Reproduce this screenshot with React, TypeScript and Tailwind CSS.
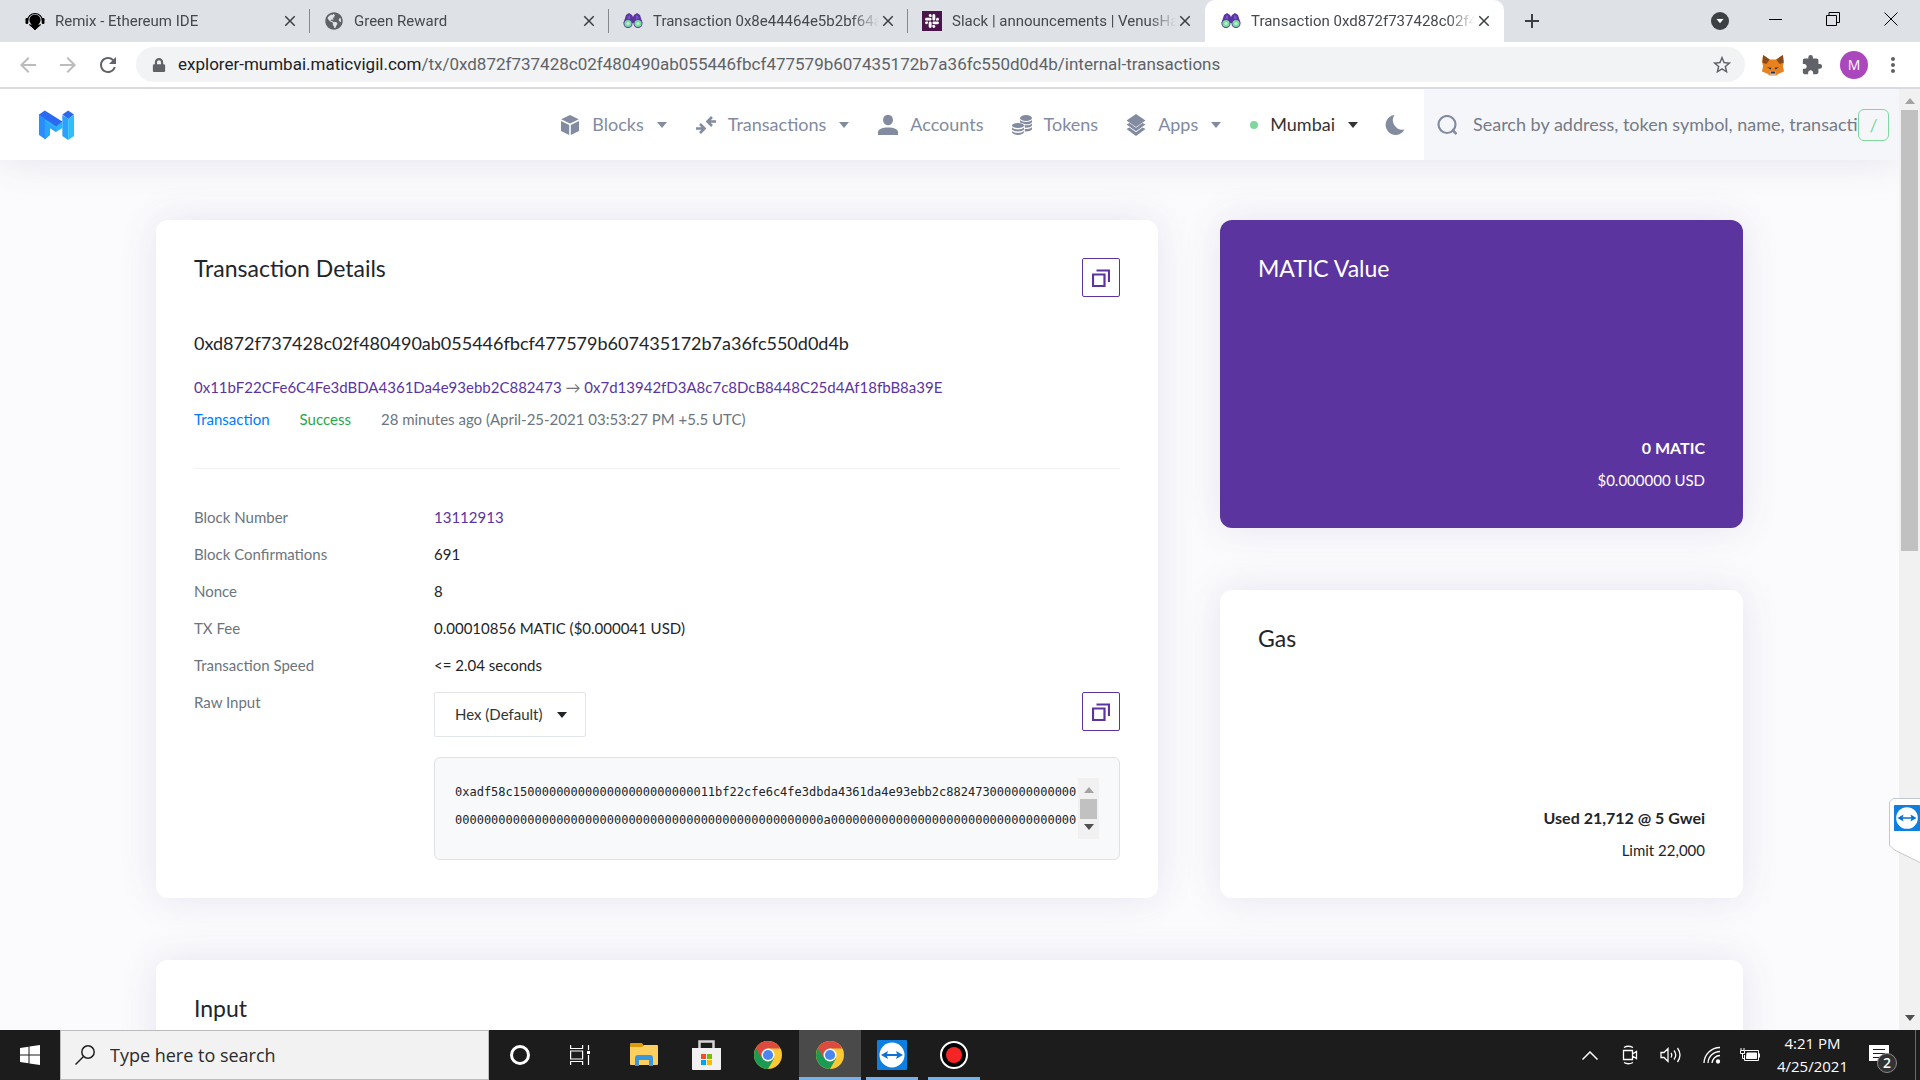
import type { ReactNode } from "react";
import { FaGlobeAmericas, FaSlack, FaLock } from "react-icons/fa";
import {
  MdArrowBack,
  MdArrowForward,
  MdRefresh,
  MdStarBorder,
  MdMoreVert,
  MdClose,
  MdAdd,
  MdExtension,
} from "react-icons/md";

const ADDRESS_FROM = "0x11bF22CFe6C4Fe3dBDA4361Da4e93ebb2C882473";
const ADDRESS_TO = "0x7d13942fD3A8c7c8DcB8448C25d4Af18fbB8a39E";
const TX_HASH = "0xd872f737428c02f480490ab055446fbcf477579b607435172b7a36fc550d0d4b";

const RAW_INPUT =
  "0xadf58c15" +
  "0".repeat(24) +
  "11bf22cfe6c4fe3dbda4361da4e93ebb2c882473" +
  "0".repeat(63) +
  "a" +
  "0".repeat(34);

/* ---------- icons ---------- */

function Binoculars() {
  return (
    <svg viewBox="0 0 20 20" className="size-5">
      <path d="M3 4l3-2 3 2 1 2 1-2 3-2 3 2 2.500 8H.5z" fill="#5b34a0" />
      <path d="M5 5l2-1v5H4zM13 4l2 1 1 4h-3z" fill="#7b50cf" />
      <circle cx="5" cy="12.500" r="4.500" fill="#5b34a0" />
      <circle cx="15" cy="12.500" r="4.500" fill="#5b34a0" />
      <circle cx="5" cy="12.500" r="3.600" fill="#7bdc9f" />
      <circle cx="15" cy="12.500" r="3.600" fill="#7bdc9f" />
      <circle cx="5" cy="12.500" r="1.500" fill="#b8f2cd" />
      <circle cx="15" cy="12.500" r="1.500" fill="#b8f2cd" />
    </svg>
  );
}

function RemixIcon() {
  return (
    <svg viewBox="0 0 20 20" className="size-5">
      <path d="M2.500 10a7.500 7.500 0 0 1 15 0" fill="none" stroke="#000" strokeWidth="1.200" />
      <circle cx="10" cy="9" r="5.600" fill="#000" />
      <rect x="0.500" y="7" width="2.800" height="6" rx="1.200" fill="#000" />
      <rect x="16.700" y="7" width="2.800" height="6" rx="1.200" fill="#000" />
      <path d="M4 13.500l3 2.500h6l3-2.500M7 16l3 3 3-3z" fill="#000" stroke="#000" strokeWidth="0.800" />
    </svg>
  );
}

function MaticLogo() {
  return (
    <svg viewBox="0 0 36 30" className="h-[30px] w-[35px]" preserveAspectRatio="none">
      <path d="M0 4l11 7v14l-5 4-6-4z" fill="#2b8cff" />
      <path d="M11 13v12l-5 4.500-0-14z" fill="#2b9cfd" />
      <path d="M11.500 18l6 4 6.500-4v-7l-8 1-10-2v5z" fill="#2bb4fb" />
      <path d="M6 11l11.500 7v4L11 18v7l-5 4.500z" fill="#2ba4fc" />
      <path d="M0 4.500L6 .5l18 11-6.500 5z" fill="#2b6af0" />
      <path d="M24 5l6 4v21l-6-4z" fill="#2ba0fd" />
      <path d="M36 5l-6 4v21l6-4z" fill="#2cc0fa" />
      <path d="M24 4.500l6-4 6 4-6 4.500z" fill="#2b6af0" />
    </svg>
  );
}

function CubeIcon() {
  return (
    <svg viewBox="0 0 20 20" className="size-5" fill="currentColor">
      <path d="M10 0l8.800 4.300L10 8.600 1.200 4.300z" />
      <path d="M1 6l8.200 4v10L1 16z" />
      <path d="M19 6l-8.200 4v10L19 16z" />
    </svg>
  );
}

function SwapIcon() {
  return (
    <svg viewBox="0 0 20 20" className="size-5" fill="none" stroke="currentColor" strokeWidth="2.600">
      <path d="M20 6.500h-7.500M16 2l-4.500 4.500L16 11" />
      <path d="M0 13.500h7.500M4 9l4.500 4.500L4 18" />
    </svg>
  );
}

function PersonIcon() {
  return (
    <svg viewBox="0 0 20 20" className="size-5" fill="currentColor">
      <ellipse cx="10" cy="5" rx="5" ry="5.200" />
      <path d="M0 20v-3c0-2.500 4-4.500 10-4.500s10 2 10 4.500v3z" />
    </svg>
  );
}

function CoinsIcon() {
  return (
    <svg viewBox="0 0 20 20" className="size-5" fill="currentColor">
      <ellipse cx="14" cy="3" rx="6" ry="3" />
      <path d="M8 5c2 2.500 10 2.500 12 0v2c-1 2.500-6 3-8.500 1.500L8 7.500zM12.500 10c3 .6 6.500 0 7.500-1.800v2.300c-1 1.700-4 2.400-7 2.200zM12.800 14c3 .2 6.200-.3 7.200-2v2.300c-1 1.700-4 2.400-7.200 2.200z" />
      <ellipse cx="6" cy="10.500" rx="6" ry="2.600" />
      <path d="M0 12.500c2 2.500 10 2.500 12 0v2c-2 2.500-10 2.500-12 0zM0 16c2 2.500 10 2.500 12 0v1.500c-2 3.300-10 3.300-12 0z" />
    </svg>
  );
}

function LayersIcon() {
  return (
    <svg viewBox="0 0 20 22" className="h-[22px] w-5" fill="currentColor">
      <path d="M10 0l9.500 6.500L10 13 .5 6.500z" />
      <path d="M.5 10.500L3.500 9 10 13.800 16.500 9l3 1.500L10 17.300z" />
      <path d="M.5 15l3-1.500L10 18.300l6.500-4.800 3 1.500-9.500 7z" />
    </svg>
  );
}

function MoonIcon() {
  return (
    <svg viewBox="0 0 20 20" className="size-5" fill="currentColor">
      <path d="M9.500 0A10 10 0 1 0 19.500 14.500 9.500 9.500 0 0 1 9.500 0z" />
    </svg>
  );
}

function Caret({ className = "" }: { className?: string }) {
  return (
    <svg viewBox="0 0 12 6" className={`h-1.5 w-3 ${className}`} fill="currentColor">
      <path d="M1 0h10L6 6z" />
    </svg>
  );
}

function FoxIcon() {
  return (
    <svg viewBox="0 0 20 20" className="size-[22px]">
      <path d="M1 1l6 4h6l6-4 1 6-1 4 1 5-5 2-2 1.500H7L5 18l-5-2 1-5-1-4z" fill="#e8821e" />
      <path d="M1 1l6 4-3 4-3.500-1zM19 1l-6 4 3 4 3.500-1z" fill="#8a4a1c" />
      <path d="M4.500 12l4 .5L8 14zM15.500 12l-4 .5.5 1.500z" fill="#24344a" />
      <path d="M7 17l1-1.500h4l1 1.500-1 2.500H8z" fill="#d7c1b3" />
      <path d="M8.200 16h3.600l.4 1.800H7.800z" fill="#24344a" />
    </svg>
  );
}

function ChromeIcon() {
  return (
    <svg viewBox="0 0 28 28" className="size-7">
      <circle cx="14" cy="14" r="14" fill="#fcc934" />
      <path d="M14 14L1.900 7A14 14 0 0 0 14 28l6-10.500z" fill="#1a9a53" />
      <path d="M14 7.500h12.300A14 14 0 0 0 1.900 7L8 17.500z" fill="#dd4b3e" />
      <circle cx="14" cy="14" r="6.500" fill="#fff" />
      <circle cx="14" cy="14" r="5.100" fill="#4a86f0" />
    </svg>
  );
}

function TeamViewerIcon({ className = "size-[30px]" }: { className?: string }) {
  return (
    <svg viewBox="0 0 30 30" className={className}>
      <rect width="30" height="30" rx="1" fill="#0c7fe0" />
      <circle cx="15" cy="15" r="12.500" fill="#fff" />
      <path d="M4 15l7-4-1 3h10l-1-3 7 4-7 4 1-3H10l1 3z" fill="#0c72d8" />
    </svg>
  );
}

function StoreIcon() {
  return (
    <svg viewBox="0 0 29 30" className="h-[30px] w-[29px]">
      <path d="M7.500 9V1.500h14V9" fill="none" stroke="#d5d5d5" strokeWidth="2.500" />
      <path d="M0 8h29v21a1 1 0 0 1-1 1H1a1 1 0 0 1-1-1z" fill="#f1f1f1" />
      <path d="M9 14h5v5H9z" fill="#f25022" />
      <path d="M15 14h5v5h-5z" fill="#7fba00" />
      <path d="M9 20h5v5H9z" fill="#00a4ef" />
      <path d="M15 20h5v5h-5z" fill="#ffb900" />
    </svg>
  );
}

function ExplorerIcon() {
  return (
    <svg viewBox="0 0 28 24" className="h-6 w-7">
      <path d="M0 1a1 1 0 0 1 1-1h11l2 3v4H0z" fill="#dd9b07" />
      <path d="M0 4h12l2-2h13a1 1 0 0 1 1 1v18a1 1 0 0 1-1 1H1a1 1 0 0 1-1-1z" fill="#fbd05e" />
      <path d="M5 23v-8a3 3 0 0 1 3-3h12a3 3 0 0 1 3 3v8h-4v-6H9v6z" fill="#3a96dd" />
    </svg>
  );
}

/* ---------- browser chrome ---------- */

const tabs: { title: string; icon: ReactNode; active?: boolean }[] = [
  { title: "Remix - Ethereum IDE", icon: <RemixIcon /> },
  { title: "Green Reward", icon: <FaGlobeAmericas className="size-[18px] text-[#5f6368]" /> },
  { title: "Transaction 0x8e44464e5b2bf64a", icon: <Binoculars /> },
  {
    title: "Slack | announcements | VenusHa",
    icon: (
      <span className="flex size-5 items-center justify-center bg-[#4a154b] text-white">
        <FaSlack className="size-4" />
      </span>
    ),
  },
  { title: "Transaction 0xd872f737428c02f4", icon: <Binoculars />, active: true },
];

function TabStrip() {
  return (
    <div className="flex h-[42px] shrink-0 items-stretch bg-[#dee1e6] pl-[9px]">
      {tabs.map((tab, i) => (
        <div
          key={tab.title}
          className={`flex w-[299px] items-center gap-2.5 pr-[11px] pl-4 text-[#45494d] ${
            tab.active ? "rounded-t-[10px] bg-white" : ""
          }`}
        >
          <span className="flex w-5 justify-center">{tab.icon}</span>
          <span className="min-w-0 flex-1 overflow-hidden font-[Roboto,sans-serif] text-[15px] whitespace-nowrap [mask-image:linear-gradient(to_right,black_88%,transparent)]">
            {tab.title}
          </span>
          <button aria-label="Close tab" className="-ml-2.5 text-[#3c4043]">
            <MdClose className="size-[18px]" />
          </button>
          {i < 3 && <span className="-mr-[13px] h-6 w-px bg-[#85888c]" />}
        </div>
      ))}
      <button aria-label="New tab" className="ml-4 text-[#3c4043]">
        <MdAdd className="size-6" />
      </button>
      <div className="ml-auto flex items-center gap-11 pr-[22px] pb-1">
        <span className="-mr-1 mt-1 flex size-[18px] items-center justify-center rounded-full bg-[#3c4043] text-white">
          <Caret className="scale-75" />
        </span>
        <button aria-label="Minimize" className="h-px w-[13px] bg-black" />
        <button aria-label="Restore">
          <svg viewBox="0 0 14 14" className="size-3.5" fill="none" stroke="#000">
            <path d="M.5 3.500h10v10H.5zM3 3.500v-3h10.500v10H11" />
          </svg>
        </button>
        <button aria-label="Close window">
          <svg viewBox="0 0 14 14" className="size-3.5" stroke="#000">
            <path d="M.5.5l13 13M13.500.5l-13 13" />
          </svg>
        </button>
      </div>
    </div>
  );
}

function Toolbar() {
  return (
    <div className="flex h-[47px] shrink-0 items-center border-b-2 border-[#dadbe2] bg-white pr-[19px] pl-4 text-[#5f6368]">
      <div className="flex items-center gap-4 pr-4">
        <button aria-label="Back" className="text-[#babcbe]">
          <MdArrowBack className="size-6" />
        </button>
        <button aria-label="Forward" className="text-[#babcbe]">
          <MdArrowForward className="size-6" />
        </button>
        <button aria-label="Reload">
          <MdRefresh className="size-6" />
        </button>
      </div>
      <div className="flex h-[35px] flex-1 items-center rounded-full bg-[#f1f3f4] pr-3 pl-4">
        <FaLock className="size-3.5" />
        <div className="ml-3 flex-1 font-[Roboto,sans-serif] text-[17px] whitespace-nowrap">
          <span className="text-[#202124]">explorer-mumbai.maticvigil.com</span>
          /tx/{TX_HASH}/internal-transactions
        </div>
        <MdStarBorder className="size-[22px]" />
      </div>
      <div className="flex items-center gap-[17px] pl-[17px]">
        <FoxIcon />
        <MdExtension className="size-[22px]" />
        <span className="flex size-7 items-center justify-center rounded-full bg-[#ab47bc] text-sm text-white">M</span>
        <button aria-label="Menu" className="-mx-1">
          <MdMoreVert className="size-6" />
        </button>
      </div>
    </div>
  );
}

/* ---------- explorer page ---------- */

const nav = [
  { label: "Blocks", icon: <CubeIcon />, menu: true },
  { label: "Transactions", icon: <SwapIcon />, menu: true },
  { label: "Accounts", icon: <PersonIcon /> },
  { label: "Tokens", icon: <CoinsIcon /> },
  { label: "Apps", icon: <LayersIcon />, menu: true },
];

function SiteHeader() {
  return (
    <header className="relative flex h-[71px] shrink-0 items-center bg-white pl-[39px] text-lg text-[#828ba0] shadow-[0_0_38px_rgba(80,70,130,0.14)]">
      <a href="#" aria-label="Home">
        <MaticLogo />
      </a>
      <nav className="ml-auto flex items-center gap-7 pr-[19px]">
        {nav.map((item) => (
          <a key={item.label} href="#" className="flex items-center">
            {item.icon}
            <span className="ml-3 pb-0.5">{item.label}</span>
            {item.menu && <Caret className="ml-3" />}
          </a>
        ))}
        <button className="flex items-center text-[#333]">
          <span className="size-2 rounded-full bg-[#80d6a1]" />
          <span className="ml-3 pb-0.5">Mumbai</span>
          <Caret className="ml-3" />
        </button>
        <button aria-label="Dark mode" className="-ml-0.5">
          <MoonIcon />
        </button>
      </nav>
      <label className="flex h-full w-[475px] items-center bg-[#f5f6fa] pr-2.5 pl-[13px]">
        <svg viewBox="0 0 20 20" className="size-5 shrink-0" fill="none" stroke="currentColor" strokeWidth="2.200">
          <circle cx="10" cy="9.500" r="8.500" />
          <path d="M15 14.500l4.500 4.500" strokeWidth="2.500" />
        </svg>
        <input
          type="text"
          aria-label="Search"
          placeholder="Search by address, token symbol, name, transaction hash, or block number"
          className="ml-4 min-w-0 flex-1 bg-transparent pb-0.5 outline-none placeholder:text-[#757b86]"
        />
        <span className="flex h-8 w-[31px] items-center justify-center rounded-md border border-[#80d6a1] text-[#80d6a1]">/</span>
      </label>
    </header>
  );
}

function Card({ className = "bg-white", children }: { className?: string; children: ReactNode }) {
  return (
    <section className={`rounded-xl px-[38px] pt-[38px] shadow-[0_0_38px_rgba(70,55,140,0.12)] ${className}`}>
      {children}
    </section>
  );
}

function CardTitle({ children }: { children: ReactNode }) {
  return <h1 className="text-[23px] leading-5">{children}</h1>;
}

function CopyButton() {
  return (
    <button
      aria-label="Copy"
      className="flex h-[39px] w-[38px] shrink-0 items-center justify-center rounded-xs border border-[#5b34a0] text-[#5b34a0]"
    >
      <svg viewBox="0 0 18 18" className="size-[18px]" fill="none" stroke="currentColor" strokeWidth="2.200">
        <path d="M1 5.500h11.500V17H1z" />
        <path d="M4.500 1.500H17V13" />
      </svg>
    </button>
  );
}

const details: { label: string; value: ReactNode }[] = [
  { label: "Block Number", value: <a href="#" className="text-[#5b34a0]">13112913</a> },
  { label: "Block Confirmations", value: "691" },
  { label: "Nonce", value: "8" },
  { label: "TX Fee", value: "0.00010856 MATIC ($0.000041 USD)" },
  { label: "Transaction Speed", value: "<= 2.04 seconds" },
];

function TransactionDetails() {
  return (
    <Card className="bg-white pb-[38px]">
      <div className="flex items-start justify-between">
        <CardTitle>Transaction Details</CardTitle>
        <CopyButton />
      </div>
      <h2 className="mt-8 text-lg leading-7">{TX_HASH}</h2>
      <p className="mt-3.5 leading-8 text-[#6c757d]">
        <a href="#" className="text-[#5b34a0]">{ADDRESS_FROM}</a>
        {" → "}
        <a href="#" className="text-[#5b34a0]">{ADDRESS_TO}</a>
      </p>
      <div className="flex gap-[30px] leading-8 text-[#6c757d]">
        <span className="text-[#007bff]">Transaction</span>
        <span className="text-[#28a745]">Success</span>
        <span>28 minutes ago (April-25-2021 03:53:27 PM +5.5 UTC)</span>
      </div>
      <hr className="mt-[33px] border-[#f1f1f4]" />
      <dl className="mt-[30px] grid grid-cols-[240px_1fr] leading-[37px]">
        {details.map((row) => (
          <div key={row.label} className="contents">
            <dt className="text-[#6c757d]">{row.label}</dt>
            <dd>{row.value}</dd>
          </div>
        ))}
        <dt className="text-[#6c757d]">
          <label htmlFor="raw-format">Raw Input</label>
        </dt>
        <dd className="min-w-0 pt-2">
          <div className="flex items-start justify-between">
            <div className="relative">
              <select
                id="raw-format"
                className="h-[45px] w-[152px] appearance-none rounded-xs border border-[#e2e5ec] bg-white pl-5 text-[#333]"
              >
                <option>Hex (Default)</option>
                <option>UTF-8</option>
              </select>
              <Caret className="pointer-events-none absolute top-5 right-[18px]" />
            </div>
            <CopyButton />
          </div>
          <div className="mt-5 flex rounded-md border border-[#dee2e6] bg-[#f8f9fa] p-5">
            <pre className="h-[61px] min-w-0 flex-1 overflow-hidden font-['DejaVu_Sans_Mono',monospace] text-xs leading-7 break-all whitespace-pre-wrap">
              {RAW_INPUT}
            </pre>
            <div className="flex w-[21px] flex-col items-center bg-[#f1f1f1] py-[9px]">
              <Caret className="rotate-180 text-[#a3a3a3]" />
              <span className="mt-1.5 h-5 w-[17px] bg-[#c1c1c1]" />
              <Caret className="mt-auto text-[#505050]" />
            </div>
          </div>
        </dd>
      </dl>
    </Card>
  );
}

function SideCard({ title, main, sub, className }: { title: string; main: string; sub: string; className: string }) {
  return (
    <Card className={`flex flex-1 flex-col justify-between pb-[31px] ${className}`}>
      <CardTitle>{title}</CardTitle>
      <div className="text-right leading-[33px]">
        <p className="text-base/[33px] font-bold">{main}</p>
        <p>{sub}</p>
      </div>
    </Card>
  );
}

function Explorer() {
  return (
    <div className="flex min-w-0 flex-1 flex-col overflow-hidden bg-[#fbfbfd] font-[Lato,sans-serif]">
      <SiteHeader />
      <main className="min-h-0 flex-1 overflow-hidden pt-[60px] text-[15px] text-[#212529]">
        <div className="mx-auto grid max-w-[1587px] grid-cols-[1002fr_523fr] gap-[62px]">
          <TransactionDetails />
          <div className="flex flex-col gap-[62px]">
            <SideCard title="MATIC Value" main="0 MATIC" sub="$0.000000 USD" className="bg-[#5b34a0] text-white" />
            <SideCard title="Gas" main="Used 21,712 @ 5 Gwei" sub="Limit 22,000" className="bg-white" />
          </div>
          <div className="col-span-2">
            <Card className="bg-white pb-[200px]">
              <CardTitle>Input</CardTitle>
            </Card>
          </div>
        </div>
      </main>
    </div>
  );
}

function PageScrollbar() {
  return (
    <div className="flex w-[21px] shrink-0 flex-col items-center bg-[#f1f1f1] py-[9px]">
      <Caret className="rotate-180 text-[#a3a3a3]" />
      <span className="mt-1.5 h-[441px] w-[17px] bg-[#c1c1c1]" />
      <Caret className="mt-auto text-[#505050]" />
    </div>
  );
}

/* ---------- taskbar ---------- */

const apps: { name: string; icon: ReactNode; running?: boolean; active?: boolean }[] = [
  { name: "Cortana", icon: <span className="size-5 rounded-full border-[3px] border-white" /> },
  {
    name: "Task View",
    icon: (
      <svg viewBox="0 0 20 20" className="mr-1 size-5" fill="none" stroke="#fff" strokeWidth="1.200">
        <path d="M.6 0v3.500h12V0M.6 20v-3.500h12V20M.6 6h12v8H.6zM18.500 0v5M18.500 10v10" />
        <path d="M17 6h3v3h-3z" fill="#fff" stroke="none" />
      </svg>
    ),
  },
  { name: "File Explorer", icon: <ExplorerIcon /> },
  { name: "Microsoft Store", icon: <StoreIcon /> },
  { name: "Chrome", icon: <ChromeIcon /> },
  { name: "Chrome window", icon: <ChromeIcon />, running: true, active: true },
  { name: "TeamViewer", icon: <TeamViewerIcon />, running: true },
  {
    name: "Recorder",
    icon: (
      <span className="flex size-7 items-center justify-center rounded-full border-2 border-white bg-black">
        <span className="size-4 rounded-full bg-[#f52525]" />
      </span>
    ),
    running: true,
  },
];

function Taskbar() {
  return (
    <footer className="flex h-[50px] shrink-0 items-stretch bg-[#1c1c1c] text-white">
      <button aria-label="Start" className="flex w-[60px] items-center justify-center">
        <svg viewBox="0 0 20 20" className="size-5" fill="#fff">
          <path d="M0 3l8.500-1.200v7.700H0zM9.500 1.600L20 0v9.500H9.500zM0 10.500h8.500v7.700L0 17zM9.500 10.500H20V20L9.500 18.400z" />
        </svg>
      </button>
      <label className="flex w-[429px] items-center border border-[#bcbcbc] bg-[#f2f2f2] pl-3.5 text-[#2b2b2b]">
        <svg viewBox="0 0 20 20" className="size-5" fill="none" stroke="#222" strokeWidth="1.500">
          <circle cx="13" cy="7" r="6.200" />
          <path d="M8.500 11.500L.5 19.500" />
        </svg>
        <input
          type="text"
          aria-label="Search"
          placeholder="Type here to search"
          className="ml-[15px] flex-1 text-lg outline-none placeholder:text-[#2b2b2b]"
        />
      </label>
      {apps.map((app) => (
        <button
          key={app.name}
          aria-label={app.name}
          className={`relative flex w-[62px] items-center justify-center ${app.active ? "bg-[#4a4a4a]" : ""}`}
        >
          {app.icon}
          {app.running && (
            <span className={`absolute bottom-0 h-[3px] bg-[#76b0e8] ${app.active ? "inset-x-0" : "inset-x-[5px]"}`} />
          )}
        </button>
      ))}
      <div className="ml-auto flex items-center gap-[19px]">
        <svg viewBox="0 0 16 9" className="h-[9px] w-4" fill="none" stroke="#fff" strokeWidth="1.500">
          <path d="M.5 8.500L8 1l7.500 7.500" />
        </svg>
        <svg viewBox="0 0 22 20" className="ml-0.5 h-5 w-[22px]" fill="none" stroke="#fff" strokeWidth="1.300">
          <path d="M4.500 5.500h9v9h-9zM13.500 9l4-2.500v7l-4-2.500M5 2.500q4-2.500 9 0M5 17.500q4 2.500 9 0" />
        </svg>
        <svg viewBox="0 0 22 18" className="mr-0.5 h-[18px] w-[22px]" fill="none" stroke="#fff" strokeWidth="1.300">
          <path d="M1 6.500h3l4-4v13l-4-4H1zM11 7q1.500 2 0 4.500M14 4.500q3.500 4.500 0 9M17.500 2q5 7 0 14" />
        </svg>
        <svg viewBox="0 0 18 18" className="size-[18px]" fill="none" stroke="#fff" strokeWidth="1.300">
          <path d="M1 17A16 16 0 0 1 17 1.500M5 17A12 12 0 0 1 17 5.500M9 17a8 8 0 0 1 8-7.500" />
          <circle cx="15" cy="15.500" r="1.500" fill="#fff" />
        </svg>
        <svg viewBox="0 0 20 14" className="h-3.5 w-5" fill="none" stroke="#fff">
          <path d="M5 2.500h13.500v10H4.500V7M19.500 5.500v4M1 0v2M4 0v2M.5 2.500h4v3h-4zM2.500 5.500v5h2" />
          <path d="M7 5h9.500v5.500H6.500z" fill="#fff" />
        </svg>
        <div className="-ml-0.5 text-center text-[15px] leading-[23px]">
          <p>4:21 PM</p>
          <p>4/25/2021</p>
        </div>
        <div className="relative mr-[26px] ml-0.5">
          <svg viewBox="0 0 20 20" className="size-5" fill="none" stroke="#1c1c1c">
            <path d="M0 0h20v16h-6v4l-4-4H0z" fill="#fff" stroke="none" />
            <path d="M4 4.500h12M4 8.500h12M4 12.500h8" />
          </svg>
          <span className="absolute top-2 left-2 flex size-5 items-center justify-center rounded-full border border-[#8a8a8a] bg-[#333] text-sm font-semibold">
            2
          </span>
        </div>
      </div>
      <span className="mr-1 w-px bg-[#6a6a6a]" />
    </footer>
  );
}

export default function App() {
  return (
    <div className="relative flex h-screen flex-col overflow-hidden font-['Open_Sans',sans-serif]">
      <TabStrip />
      <Toolbar />
      <div className="flex min-h-0 flex-1">
        <Explorer />
        <PageScrollbar />
      </div>
      <Taskbar />
      <div className="absolute top-[798px] right-0">
        <svg viewBox="0 0 31 65" className="h-[65px] w-[31px]">
          <path d="M31 .5H4L.5 4v43l5 5L31 64.500" fill="#fff" stroke="#c2c8ce" />
        </svg>
        <TeamViewerIcon className="absolute top-[7px] right-0 size-[26px]" />
      </div>
    </div>
  );
}
